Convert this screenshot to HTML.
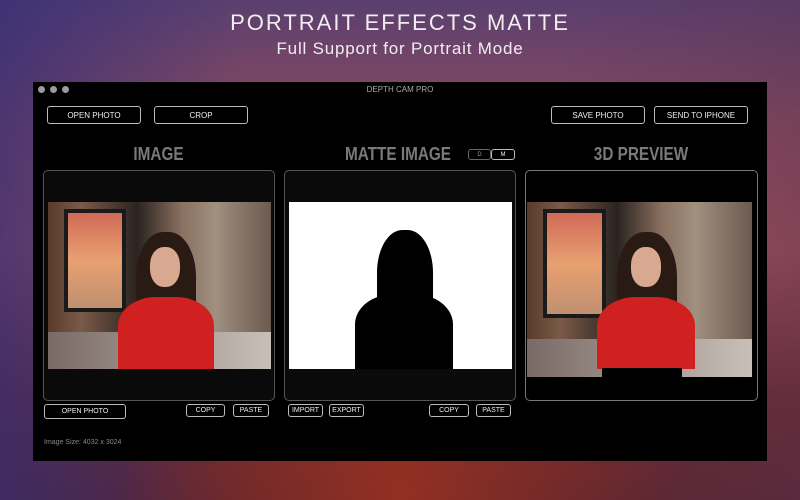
<!DOCTYPE html>
<html><head><meta charset="utf-8"><style>
*{margin:0;padding:0;box-sizing:border-box}
body{width:800px;height:500px;overflow:hidden;font-family:"Liberation Sans",sans-serif;position:relative;
background:linear-gradient(180deg,#5a3f70 0%,#8a4a5e 25%,#a0505a 50%,#6a2a30 80%,#5a2530 100%);}
.bg2{position:absolute;inset:0;background:radial-gradient(ellipse at 50% 100%,rgba(160,50,30,.8),transparent 50%),linear-gradient(90deg,rgba(50,45,120,.7),transparent 30%,transparent 70%,rgba(90,50,80,.4));}
.t1{position:absolute;top:10px;width:100%;text-align:center;color:#f2eef0;font-size:22px;letter-spacing:2px;font-weight:300}
.t2{position:absolute;top:39px;width:100%;text-align:center;color:#f2eef0;font-size:17px;letter-spacing:.8px}
.win{position:absolute;left:33px;top:82px;width:734px;height:379px;background:#000;}
.dot{position:absolute;top:4px;width:7px;height:7px;border-radius:50%;background:#9a9a9a}
.title{position:absolute;top:3px;width:100%;text-align:center;color:#aaa;font-size:8px}
.btn{position:absolute;border:1px solid #bbb;border-radius:3px;color:#eee;font-size:8px;display:flex;align-items:center;justify-content:center}
.h{position:absolute;color:#7a7a7a;font-weight:bold;font-size:18px;text-align:center;transform:scaleX(.85)}
.panel{position:absolute;top:88px;height:231px;border:1px solid #555;border-radius:5px;background:#0a0a0a;overflow:hidden}
.photo{position:absolute;overflow:hidden;background:linear-gradient(90deg,#5a3a2a 0%,#7a5a48 15%,#2a2420 40%,#8a7060 60%,#a09080 75%,#6a5a50 100%);}
.street{position:absolute;left:0;right:0;bottom:0;height:22%;background:linear-gradient(90deg,#7a6a66,#c8c0b8)}
.shop{position:absolute;left:7%;top:4%;width:28%;height:62%;background:linear-gradient(#d06a58,#e8a070 50%,#c09070);border:4px solid #1a1a1a}
.hair{position:absolute;border-radius:45% 45% 20% 20%;background:#2a1a14}
.face{position:absolute;border-radius:45%;background:#d8a890}
.sw{position:absolute;border-radius:40% 40% 0 0;background:#d02020}
</style></head><body><div class="bg2"></div>
<div class="t1">PORTRAIT EFFECTS MATTE</div>
<div class="t2">Full Support for Portrait Mode</div>
<div class="win">
<div class="dot" style="left:5px"></div><div class="dot" style="left:17px"></div><div class="dot" style="left:29px"></div>
<div class="title">DEPTH CAM PRO</div>
<div class="btn" style="left:14px;top:24px;width:94px;height:18px">OPEN PHOTO</div>
<div class="btn" style="left:121px;top:24px;width:94px;height:18px">CROP</div>
<div class="btn" style="left:518px;top:24px;width:94px;height:18px">SAVE PHOTO</div>
<div class="btn" style="left:621px;top:24px;width:94px;height:18px">SEND TO IPHONE</div>
<div class="h" style="left:10px;width:231px;top:62px">IMAGE</div>
<div class="h" style="left:290px;width:150px;top:62px">MATTE IMAGE</div>
<div class="btn" style="left:435px;top:67px;width:23px;height:11px;font-size:6px;border-color:#666;color:#999">D</div>
<div class="btn" style="left:458px;top:67px;width:24px;height:11px;font-size:6px">M</div>
<div class="h" style="left:492px;width:232px;top:62px">3D PREVIEW</div>

<div class="panel" style="left:10px;width:232px">
 <div class="photo" style="left:4px;top:31px;width:223px;height:167px">
  <div class="shop"></div><div class="street"></div>
  <div class="hair" style="left:88px;top:30px;width:60px;height:100px"></div>
  <div class="sw" style="left:70px;top:95px;width:96px;height:72px"></div>
  <div class="face" style="left:102px;top:45px;width:30px;height:40px"></div>
 </div>
</div>
<div class="panel" style="left:251px;width:232px">
 <div style="position:absolute;left:4px;top:31px;width:223px;height:167px;background:#fff;overflow:hidden">
  <div class="hair" style="left:88px;top:28px;width:56px;height:95px;background:#000"></div>
  <div class="sw" style="left:66px;top:92px;width:98px;height:76px;background:#000"></div>
 </div>
</div>
<div class="panel" style="left:492px;width:233px;background:#000;border-color:#777">
 <div class="photo" style="left:1px;top:31px;width:225px;height:175px">
  <div class="shop"></div><div class="street"></div>
  <div class="hair" style="left:90px;top:30px;width:60px;height:100px"></div>
  <div class="sw" style="left:70px;top:95px;width:98px;height:72px"></div>
  <div class="face" style="left:104px;top:45px;width:30px;height:40px"></div>
  <div style="position:absolute;left:75px;bottom:0;width:80px;height:9px;background:#000"></div>
 </div>
</div>
<div class="btn" style="left:11px;top:322px;width:82px;height:15px;font-size:7px">OPEN PHOTO</div>
<div class="btn" style="left:153px;top:322px;width:39px;height:13px;font-size:7px">COPY</div>
<div class="btn" style="left:200px;top:322px;width:36px;height:13px;font-size:7px">PASTE</div>
<div class="btn" style="left:255px;top:322px;width:35px;height:13px;font-size:7px">IMPORT</div>
<div class="btn" style="left:296px;top:322px;width:35px;height:13px;font-size:7px">EXPORT</div>
<div class="btn" style="left:396px;top:322px;width:40px;height:13px;font-size:7px">COPY</div>
<div class="btn" style="left:443px;top:322px;width:35px;height:13px;font-size:7px">PASTE</div>
<div style="position:absolute;left:11px;top:357px;color:#888;font-size:7px">Image Size: 4032 x 3024</div>
</div>
</body></html>
